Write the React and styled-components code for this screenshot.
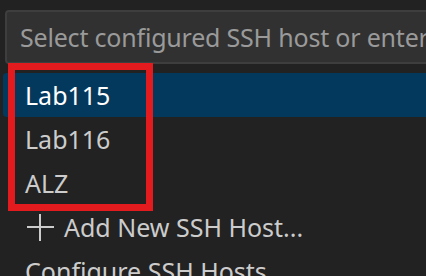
import React from "react";
import styled, { createGlobalStyle } from "styled-components";

const GlobalStyle = createGlobalStyle`
  html, body {
    margin: 0;
    padding: 0;
    background: #222222;
    overflow: hidden;
  }
  body {
    font-family: "Noto Sans", "Open Sans", sans-serif;
  }
`;

const hosts = ["Lab115", "Lab116", "ALZ"];

const QuickPick = () => {
  return (
    <Panel>
      <GlobalStyle />
      <InputBox>
        <Placeholder>Select configured SSH host or enter user@host</Placeholder>
      </InputBox>
      <List>
        {hosts.map((h, i) => (
          <Row key={h} $active={i === 0}>
            <Label $active={i === 0}>{h}</Label>
          </Row>
        ))}
        <Row>
          <PlusIcon width="28" height="28" viewBox="0 0 28 28">
            <path d="M14 1v27M1 14h27" stroke="#cccccc" strokeWidth="2" fill="none" />
          </PlusIcon>
          <Label>Add New SSH Host...</Label>
        </Row>
        <Row>
          <Label>Configure SSH Hosts...</Label>
        </Row>
        <Highlight />
      </List>
    </Panel>
  );
};

const Panel = styled.div`
  width: 426px;
  height: 276px;
  overflow: hidden;
  background: #222222;
  padding-top: 10px;
  box-sizing: border-box;
`;

const InputBox = styled.div`
  margin-left: 5px;
  width: 460px;
  height: 54px;
  box-sizing: border-box;
  background: #313131;
  border: 2px solid #3e3e3e;
  border-radius: 4px;
  display: flex;
  align-items: center;
  padding-left: 13px;
  overflow: hidden;
  white-space: nowrap;
`;

const Placeholder = styled.span`
  color: #9a9a9a;
  font-size: 25px;
  letter-spacing: -0.2px;
`;

const List = styled.div`
  position: relative;
  margin-top: 9px;
`;

const Row = styled.div`
  height: 44px;
  margin-left: 3px;
  padding-left: 22px;
  display: flex;
  align-items: center;
  gap: 10px;
  border-radius: 4px 0 0 4px;
  background: ${(p) => (p.$active ? "#04395e" : "transparent")};
  white-space: nowrap;
`;

const Label = styled.span`
  font-size: 25px;
  color: ${(p) => (p.$active ? "#ffffff" : "#cccccc")};
`;

const PlusIcon = styled.svg`
  display: block;
  margin-left: 1px;
  flex-shrink: 0;
`;

const Highlight = styled.div`
  position: absolute;
  left: 8px;
  top: -10px;
  width: 145px;
  height: 148px;
  box-sizing: border-box;
  border: 7px solid #e31b1f;
  pointer-events: none;
`;

export default QuickPick;
